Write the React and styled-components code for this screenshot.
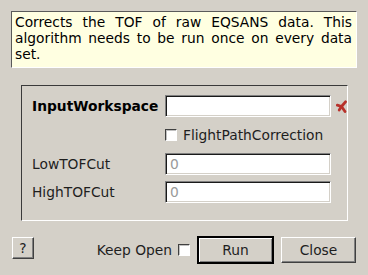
import React from 'react'
import styled, { createGlobalStyle } from 'styled-components'

const GlobalStyle = createGlobalStyle`
  html, body {
    margin: 0;
    padding: 0;
    background: #d4d0c8;
  }
  body {
    font-family: "DejaVu Sans", Verdana, sans-serif;
    font-size: 13.8px;
    color: #000;
  }
`

const Dialog = styled.div`
  width: 368px;
  height: 275px;
  box-sizing: border-box;
  padding-top: 11px;
  display: flex;
  flex-direction: column;
`

const HelpBox = styled.div`
  margin-left: 11px;
  width: 346px;
  height: 57px;
  box-sizing: border-box;
  padding: 2px 4px 0 3px;
  background: #ffffe1;
  border: 1px solid;
  border-color: #5a5a5a #ffffff #ffffff #5a5a5a;
  text-align: justify;
  line-height: 16px;
`

const GroupBox = styled.div`
  margin: 17px 0 0 21px;
  width: 327px;
  height: 136px;
  box-sizing: border-box;
  border: 1px solid;
  border-color: #3a3a3a #ffffff #ffffff #3a3a3a;
  padding: 9px 0 0 10px;
  overflow: hidden;
`

const Form = styled.div`
  display: grid;
  grid-template-columns: 133px 166px auto;
  grid-template-rows: 22px 24px 22px 22px;
  row-gap: 6px;
  align-items: center;
`

const Label = styled.div`
  font-weight: ${p => (p.$required ? 'bold' : 'normal')};
  color: ${p => (p.$required ? '#000' : '#1e1e1e')};
  white-space: nowrap;
`

const TextInput = styled.input`
  width: 166px;
  height: 22px;
  box-sizing: border-box;
  margin: 0;
  padding: 0 4px;
  font: inherit;
  background: #fff;
  border: 1px solid;
  border-color: #808080 #ffffff #ffffff #808080;
  box-shadow: inset 1px 1px #1a1a1a, inset -1px -1px #d4d0c8;
  outline: none;
  &::placeholder {
    color: #9a9a9a;
  }
`

const CheckLabel = styled.label`
  grid-column: 2 / span 2;
  display: flex;
  align-items: center;
  gap: 6px;
  white-space: nowrap;
  color: #1e1e1e;
`

const CheckBox = styled.span`
  display: inline-block;
  width: 12px;
  height: 12px;
  box-sizing: border-box;
  background: #fff;
  border: 1px solid;
  border-color: #404040 #ffffff #ffffff #404040;
  box-shadow: 1px 1px 0 #c0c0c0 inset;
`

const Star = styled.svg`
  margin-left: 5px;
  display: block;
`

const Empty = styled.div``

const ButtonBar = styled.div`
  margin-top: 15px;
  padding: 0 12px;
  height: 28px;
  display: flex;
  align-items: center;
`

const Spacer = styled.div`
  flex: 1;
`

const KeepOpen = styled.label`
  display: flex;
  align-items: center;
  gap: 6px;
  margin-right: 7px;
  color: #1e1e1e;
`

const Actions = styled.div`
  display: flex;
  align-items: center;
  gap: 7px;
`

const Button = styled.button`
  height: ${p => (p.$small ? '22px' : '26px')};
  width: ${p => p.$width}px;
  box-sizing: border-box;
  margin: 0;
  padding: 0;
  font: inherit;
  color: #1e1e1e;
  background: #d4d0c8;
  border: 1px solid;
  border-color: #ffffff #404040 #404040 #ffffff;
  box-shadow: inset -1px -1px #808080;
  align-self: ${p => (p.$small ? 'flex-start' : 'center')};
  margin-top: ${p => (p.$small ? '1px' : '0')};
  ${p =>
    p.$default &&
    `
    height: 28px;
    border: 2px solid #000;
    box-shadow: inset 1px 1px #ffffff, inset -1px -1px #808080;
  `}
`

export default function App () {
  return (
    <Dialog>
      <GlobalStyle />
      <HelpBox>
        Corrects the TOF of raw EQSANS data. This algorithm needs to be run once on every data set.
      </HelpBox>
      <GroupBox>
        <Form>
          <Label $required>InputWorkspace</Label>
          <TextInput />
          <Star width='11' height='13' viewBox='0 0 11 13'>
            <g stroke='#b8312a' strokeWidth='2.8' strokeLinecap='round'>
              <line x1='5.5' y1='6.5' x2='9.5' y2='1.8' />
              <line x1='5.5' y1='6.5' x2='1.3' y2='5.2' />
              <line x1='5.5' y1='6.5' x2='9' y2='11.5' />
              <line x1='5.5' y1='6.5' x2='3.2' y2='10' />
            </g>
          </Star>

          <Empty />
          <CheckLabel>
            <CheckBox />
            FlightPathCorrection
          </CheckLabel>

          <Label>LowTOFCut</Label>
          <TextInput placeholder='0' />
          <Empty />

          <Label>HighTOFCut</Label>
          <TextInput placeholder='0' />
          <Empty />
        </Form>
      </GroupBox>
      <ButtonBar>
        <Button $small $width={22}>?</Button>
        <Spacer />
        <KeepOpen>
          Keep Open
          <CheckBox />
        </KeepOpen>
        <Actions>
          <Button $default $width={77}>Run</Button>
          <Button $width={75}>Close</Button>
        </Actions>
      </ButtonBar>
    </Dialog>
  )
}
